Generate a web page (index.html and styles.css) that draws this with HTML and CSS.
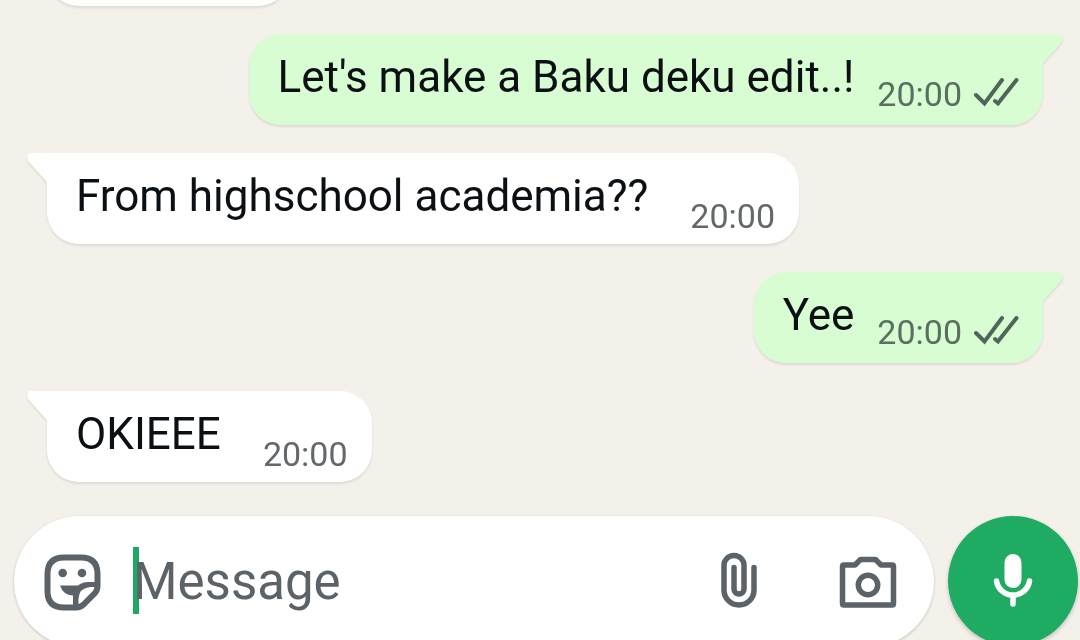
FILE: index.html
```html
<!DOCTYPE html>
<html lang="en">
<head>
    <meta charset="UTF-8">
    <meta name="viewport" content="width=device-width, initial-scale=1.0">
    <title>Chat</title>
    <link rel="stylesheet" href="styles.css">
</head>
<body>
    <svg width="0" height="0" class="sprite">
        <symbol id="ticks" viewBox="0 0 46 30">
            <path d="M3 17L11.500 25.500L29 2M22 23L25 25.500L43.500 2" fill="none" stroke="currentColor" stroke-width="4" stroke-linecap="round" stroke-linejoin="miter"/>
        </symbol>
    </svg>

    <main class="chat">
        <div class="message received earlier"></div>
        <div class="message sent">
            <span class="text">Let's make a Baku deku edit..!</span>
            <span class="time">20:00</span>
            <svg class="ticks"><use href="#ticks"/></svg>
        </div>
        <div class="message received">
            <span class="text">From highschool academia??</span>
            <span class="time">20:00</span>
        </div>
        <div class="message sent">
            <span class="text">Yee</span>
            <span class="time">20:00</span>
            <svg class="ticks"><use href="#ticks"/></svg>
        </div>
        <div class="message received">
            <span class="text">OKIEEE</span>
            <span class="time">20:00</span>
        </div>
    </main>

    <form class="composer">
        <div class="field">
            <button type="button" class="icon" aria-label="Stickers">
                <svg viewBox="0 0 60 60">
                    <path d="M22 5.500H39Q55.500 5.500 55.500 22V34Q55.500 38 53 41L41 53Q38 55.500 34 55.500H22Q5.500 55.500 5.500 39V22Q5.500 5.500 22 5.500Z" fill="none" stroke="currentColor" stroke-width="6"/>
                    <circle cx="20.700" cy="21" r="4.300" fill="currentColor"/>
                    <circle cx="40" cy="21" r="4.300" fill="currentColor"/>
                    <path d="M18 33.500H36Q40 30 46 30H55V35H48Q37 36 36.500 47V55H31V43.500Q21 43 18 33.500Z" fill="currentColor"/>
                </svg>
            </button>
            <div class="entry">
                <span class="caret"></span>
                <input type="text" placeholder="Message" aria-label="Message">
            </div>
            <button type="button" class="icon attach" aria-label="Attach">
                <svg viewBox="0 0 60 60">
                    <path d="M45 15.500V38A15 15 0 0 1 15 38V13.500A10 10 0 0 1 35 13.500V37A5 5 0 0 1 25 37V15.500" fill="none" stroke="currentColor" stroke-width="5.500" stroke-linecap="round"/>
                </svg>
            </button>
            <button type="button" class="icon" aria-label="Camera">
                <svg viewBox="0 0 60 60">
                    <path d="M6 13H17L22.500 7.500H37.500L43 13H54Q55.500 13 55.500 14.500V51.500Q55.500 53 54 53H6Q4.500 53 4.500 51.500V14.500Q4.500 13 6 13Z" fill="none" stroke="currentColor" stroke-width="5.500" stroke-linejoin="round"/>
                    <circle cx="30" cy="33" r="9.700" fill="none" stroke="currentColor" stroke-width="5.500"/>
                </svg>
            </button>
        </div>
        <button type="button" class="mic" aria-label="Record voice message">
            <svg viewBox="0 0 60 60">
                <rect x="21.500" y="3" width="17" height="34" rx="8.500" fill="currentColor"/>
                <path d="M13.500 30A16.700 16.700 0 0 0 46.500 30M30 44V53" fill="none" stroke="currentColor" stroke-width="5.500" stroke-linecap="round"/>
            </svg>
        </button>
    </form>
</body>
</html>
```
FILE: styles.css
```css
* {
    box-sizing: border-box;
}
body {
    margin: 0;
    height: 100vh;
    overflow: hidden;
    background: #f4f1eb;
    color: #0b1014;
    font-family: Roboto, sans-serif;
}
.sprite {
    position: absolute;
}
.chat {
    display: flex;
    flex-direction: column;
    gap: 28px;
    padding: 0 37px 34px 47px;
}
.message {
    position: relative;
    display: flex;
    align-items: flex-end;
    min-height: 91px;
    padding: 17px 24px 8px 29px;
    border-radius: 32px;
    filter: drop-shadow(0 2px 1px rgba(0, 0, 0, 0.09));
}
.received {
    align-self: flex-start;
    background: #fff;
    border-top-left-radius: 0;
}
.sent {
    align-self: flex-end;
    background: #d8fdd2;
    padding-bottom: 11px;
    border-top-right-radius: 0;
}
/* little tail on the top corner */
.message::before {
    content: "";
    position: absolute;
    top: 0;
    width: 22px;
    height: 32px;
    background: inherit;
}
.received::before {
    left: -20px;
    clip-path: path("M22 0H4C0 0 -1 5 2 9L20 29H22Z");
}
.sent::before {
    right: -20px;
    clip-path: path("M0 0H18C22 0 23 5 20 9L2 29H0Z");
}
/* only its bottom edge is still scrolled into view */
.earlier {
    width: 243px;
    margin-top: -85px;
}
.text {
    align-self: flex-start;
    font-size: 44px;
    line-height: 53px;
}
.time {
    margin-left: 42px;
    color: #63686b;
    font-size: 34px;
    line-height: 40px;
}
.sent .time {
    margin-left: 23px;
    color: #5b6f60;
}
.ticks {
    width: 46px;
    height: 30px;
    margin: 0 0 6px 11px;
    color: #51665a;
}
.composer {
    display: flex;
    gap: 14px;
    padding: 0 2px 0 14px;
}
.field {
    flex: 1;
    display: flex;
    align-items: center;
    height: 131px;
    padding: 0 36px 0 28px;
    border-radius: 66px;
    background: #fff;
    box-shadow: 0 1px 3px rgba(0, 0, 0, 0.2);
}
button {
    border: 0;
    padding: 0;
    background: none;
    cursor: pointer;
}
button svg {
    display: block;
    width: 60px;
    height: 60px;
}
.icon {
    color: #5b6368;
}
.entry {
    position: relative;
    flex: 1;
    margin-left: 31px;
}
.caret {
    position: absolute;
    top: 0;
    left: 0;
    width: 6px;
    height: 67px;
    background: #1fa863;
}
input {
    position: relative;
    display: block;
    width: 100%;
    height: 70px;
    padding: 0;
    border: 0;
    outline: 0;
    background: none;
    color: #0b1014;
    font: 51px Roboto, sans-serif;
}
input::placeholder {
    color: #5b6368;
    opacity: 1;
}
.attach {
    margin-right: 69px;
}
.mic {
    width: 130px;
    height: 130px;
    border-radius: 50%;
    background: #1fab61;
    color: #fff;
    box-shadow: 0 2px 4px rgba(0, 0, 0, 0.2);
}
.mic svg {
    margin: 0 auto;
}
```
